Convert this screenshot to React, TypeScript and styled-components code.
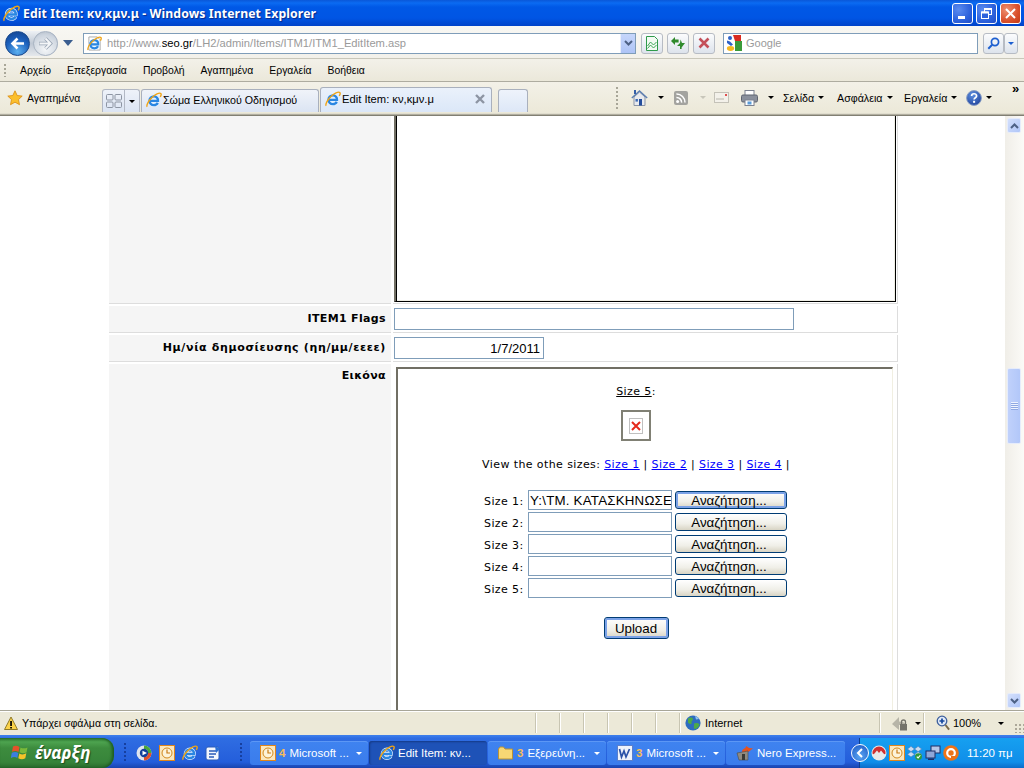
import React from "react";
import styled, { createGlobalStyle } from "styled-components";

const uiFont = '"Liberation Sans", Arial, sans-serif';
const titleFont = '"Noto Sans", "Liberation Sans", sans-serif';
const pageFont = '"DejaVu Sans", Verdana, sans-serif';

const GlobalStyle = createGlobalStyle`
  html, body {
    margin: 0;
    padding: 0;
    overflow: hidden;
    background: #fff;
  }
  * { box-sizing: border-box; }
`;

const Desktop = styled.div`
  width: 1024px;
  height: 768px;
  display: flex;
  flex-direction: column;
  overflow: hidden;
  font-family: ${uiFont};
  font-size: 11px;
  color: #000;
`;

/* ---------- title bar ---------- */
const TitleBar = styled.div`
  height: 26px;
  flex: none;
  display: flex;
  align-items: center;
  padding: 0 3px 0 3px;
  background: linear-gradient(#0a57d8 0, #0b6bf2 3px, #0058e6 7px, #0055e4 18px, #0043c9 26px);
`;

const TitleText = styled.div`
  margin-left: 3px;
  color: #fff;
  font-family: ${titleFont};
  font-weight: 700;
  font-size: 12.25px;
  letter-spacing: 0.1px;
  text-shadow: 1px 1px 1px #0a2a88;
`;

const WindowButtons = styled.div`
  margin-left: auto;
  display: flex;
  gap: 3px;
`;

const WindowButton = styled.div<{ $close?: boolean }>`
  width: 21px;
  height: 21px;
  border: 1px solid #fff;
  border-radius: 3px;
  display: flex;
  align-items: center;
  justify-content: center;
  background: ${(p) =>
    p.$close
      ? "radial-gradient(circle at 30% 30%, #ee9071, #d9502c 60%, #c23a16)"
      : "radial-gradient(circle at 30% 30%, #5b8cf0, #2d62dc 60%, #1f4cc6)"};
`;

/* ---------- address bar ---------- */
const AddressBar = styled.div`
  height: 33px;
  flex: none;
  display: flex;
  align-items: center;
  padding: 2px 6px 0 5px;
  background: linear-gradient(#f8f7f3, #f3f1ea);
  border-bottom: 1px solid #c9c7ba;
`;

const NavPill = styled.div`
  display: flex;
  gap: 3px;
  border-radius: 13px;
  background: linear-gradient(#eef1f5, #bfc8d4 50%, #e5e8ec);
`;

const NavCircle = styled.div<{ $off?: boolean }>`
  width: 25px;
  height: 25px;
  border-radius: 50%;
  display: flex;
  align-items: center;
  justify-content: center;
  border: 1px solid ${(p) => (p.$off ? "#a9b4c2" : "#1b4a8c")};
  background: ${(p) =>
    p.$off
      ? "radial-gradient(circle at 50% 75%, #f4f6f8, #ccd4de 70%, #aab4c2)"
      : "radial-gradient(circle at 50% 85%, #5cb0f0, #1b5fbb 55%, #123f8a)"};
`;

const NavArrow = styled.div`
  width: 0;
  height: 0;
  margin-left: 5px;
  border-left: 5px solid transparent;
  border-right: 5px solid transparent;
  border-top: 6px solid #3a5d8f;
`;

const AddressField = styled.div`
  width: 553px;
  height: 21px;
  margin-left: 10px;
  border: 1px solid #7f9db9;
  background: #fff;
  display: flex;
  align-items: center;
  padding-left: 3px;
  font-size: 11.2px;
  color: #9a9a9a;
  white-space: nowrap;
`;

const AddressText = styled.span`
  margin-left: 5px;
`;

const Host = styled.span`
  color: #000;
`;

const FieldDrop = styled.div`
  margin-left: auto;
  width: 15px;
  height: 19px;
  display: flex;
  align-items: center;
  justify-content: center;
  background: linear-gradient(#c6d6fb, #aec4f6);
  border-left: 1px solid #e8eefc;
`;

const RoundTool = styled.div<{ $first?: boolean }>`
  width: 22px;
  height: 21px;
  margin-left: ${(p) => (p.$first ? 5 : 4)}px;
  border: 1px solid #b7bcc4;
  border-radius: 3px;
  background: linear-gradient(#fbfcfd, #dde3ec);
  display: flex;
  align-items: center;
  justify-content: center;
`;

const SearchField = styled.div`
  width: 255px;
  height: 21px;
  margin-left: 8px;
  border: 1px solid #7f9db9;
  background: #fff;
  display: flex;
  align-items: center;
  padding-left: 2px;
  color: #9a9a9a;
  font-size: 11px;
`;

const SearchHint = styled.span`
  margin-left: 4px;
`;

const SearchGroup = styled.div`
  margin-left: 5px;
  display: flex;
`;

const SearchPart = styled.div<{ $w: number }>`
  width: ${(p) => p.$w}px;
  height: 21px;
  border: 1px solid #b7bcc4;
  border-radius: 3px;
  background: linear-gradient(#fbfcfd, #dde3ec);
  display: flex;
  align-items: center;
  justify-content: center;
`;

/* ---------- menu bar ---------- */
const MenuBar = styled.div`
  height: 23px;
  flex: none;
  display: flex;
  align-items: center;
  padding-left: 4px;
  gap: 16px;
  background: linear-gradient(#f3f1e9, #ebe8da);
  border-bottom: 1px solid #aeaca0;
`;

const Grip = styled.div<{ $h: number; $c?: string }>`
  width: 2px;
  height: ${(p) => p.$h}px;
  background: repeating-linear-gradient(${(p) => p.$c ?? "#a8a698"} 0 2px, transparent 2px 4px);
`;

const MenuGrip = styled(Grip)`
  margin-right: -2px;
`;

const MenuItem = styled.span`
  font-size: 10.4px;
`;

/* ---------- tabs and command bar ---------- */
const TabBar = styled.div`
  height: 30px;
  flex: none;
  display: flex;
  align-items: flex-end;
  padding-left: 7px;
  background: linear-gradient(#f3f1e8, #ece9d9);
`;

const Favorites = styled.div`
  width: 95px;
  height: 29px;
  display: flex;
  align-items: center;
  gap: 4px;
  font-size: 10.5px;
`;

const QuickTabs = styled.div`
  width: 38px;
  height: 23px;
  display: flex;
  border: 1px solid #b2b8c4;
  border-bottom: none;
  border-radius: 3px 3px 0 0;
  background: linear-gradient(#eef2f9, #dbe4f3);
`;

const QuickCell = styled.div<{ $w: number; $line?: boolean }>`
  width: ${(p) => p.$w}px;
  display: flex;
  align-items: center;
  justify-content: center;
  border-right: ${(p) => (p.$line ? "1px solid #b2b8c4" : "none")};
`;

const Tab = styled.div<{ $active?: boolean; $w: number }>`
  width: ${(p) => p.$w}px;
  height: ${(p) => (p.$active ? 25 : 23)}px;
  margin-left: 1px;
  display: flex;
  align-items: center;
  gap: 1px;
  padding: 0 6px 2px 4px;
  border: 1px solid #a9b0bd;
  border-bottom: none;
  border-radius: 3px 3px 0 0;
  font-size: ${(p) => (p.$active ? 11.2 : 10.7)}px;
  white-space: nowrap;
  background: ${(p) =>
    p.$active ? "linear-gradient(#eaf1fb, #dbe7f8)" : "linear-gradient(#f0f3f9, #dbe4f3)"};
`;

const TabClose = styled.div`
  margin-left: auto;
  display: flex;
`;

const NewTab = styled.div`
  width: 30px;
  height: 23px;
  margin-left: 6px;
  border: 1px solid #a9b0bd;
  border-bottom: none;
  border-radius: 3px 3px 0 0;
  background: linear-gradient(#eef3fb, #dde7f7);
`;

const CommandBar = styled.div`
  height: 29px;
  margin-left: 88px;
  display: flex;
  align-items: center;
  font-size: 10.7px;
  white-space: nowrap;
`;

const CommandSlot = styled.div<{ $w: number }>`
  width: ${(p) => p.$w}px;
  flex: none;
  display: flex;
  align-items: center;
  gap: 4px;
`;

const TinyDown = styled.span<{ $c?: string; $ml?: number }>`
  display: inline-block;
  width: 0;
  height: 0;
  margin-left: ${(p) => p.$ml ?? 0}px;
  border-left: 3px solid transparent;
  border-right: 3px solid transparent;
  border-top: 3px solid ${(p) => p.$c ?? "#000"};
`;

const Chevrons = styled.div`
  align-self: flex-start;
  margin-top: 0;
  font-size: 13px;
  font-weight: 700;
  line-height: 12px;
`;

const ChromeRule = styled.div`
  height: 4px;
  flex: none;
  background: linear-gradient(#ece9d9 0, #ece9d9 1px, #d5d2c4 2px, #8c8a7c 3px, #77756a 4px);
`;

/* ---------- page ---------- */
const Viewport = styled.div`
  height: 594px;
  flex: none;
  display: flex;
  overflow: hidden;
  background: #fff;
`;

const Page = styled.div`
  width: 1005px;
  height: 594px;
  overflow: hidden;
  padding-left: 109px;
  display: flex;
  flex-direction: column;
  gap: 2px;
  font-family: ${pageFont};
  font-size: 11px;
`;

const Row = styled.div<{ $h: number }>`
  flex: none;
  display: grid;
  grid-template-columns: 282px 505px;
  column-gap: 2px;
  height: ${(p) => p.$h}px;
  width: 789px;
`;

const LabelCell = styled.div<{ $wide?: boolean; $top?: number }>`
  background: #f5f5f5;
  border-bottom: 1px solid #ddd;
  padding: ${(p) => p.$top ?? 6}px 5px 0 0;
  text-align: right;
  font-weight: 700;
  font-size: 11px;
  letter-spacing: ${(p) => (p.$wide ? 0.65 : 0.35)}px;
`;

const ValueCell = styled.div<{ $pad?: string }>`
  border-bottom: 1px solid #ddd;
  border-right: 1px solid #ddd;
  padding: ${(p) => p.$pad ?? "2px 0 0 1px"};
  overflow: hidden;
`;

const EditorFrame = styled.div`
  width: 502px;
  height: 186px;
  background: #fff;
  border-left: 2px solid #716f64;
  border-right: 1px solid #000;
  border-bottom: 1px solid #000;
  box-shadow: inset 1px 0 0 #000, inset -1px -1px 0 #f0efe6;
`;

const TextBox = styled.input<{ $w: number; $right?: boolean }>`
  display: block;
  width: ${(p) => p.$w}px;
  height: 22px;
  padding: 0 3px 0 2px;
  border: 1px solid #7f9db9;
  background: #fff;
  font-family: "Liberation Sans", sans-serif;
  font-size: 13px;
  text-align: ${(p) => (p.$right ? "right" : "left")};
  color: #000;
  outline: none;
`;

const ImageFrame = styled.div`
  width: 497px;
  height: 420px;
  border-top: 2px solid #716f64;
  border-left: 2px solid #716f64;
  border-right: 1px solid #f1efe2;
  padding: 16px 18px 0 0;
  display: flex;
  flex-direction: column;
  align-items: center;
  letter-spacing: 0.4px;
`;

const SizeTitle = styled.div`
  height: 13px;
  line-height: 13px;
`;

const Underlined = styled.span`
  text-decoration: underline;
`;

const PreviewBox = styled.div`
  width: 30px;
  height: 31px;
  margin-top: 12px;
  border: 2px solid #808074;
  display: flex;
  align-items: center;
  justify-content: center;
`;

const BrokenImage = styled.div`
  width: 14px;
  height: 16px;
  border: 1px solid #c0c0c0;
  display: flex;
  align-items: center;
  justify-content: center;
`;

const SizeLinks = styled.div`
  margin-top: 17px;
  height: 13px;
  line-height: 13px;
  white-space: pre;
`;

const SizeLink = styled.a`
  color: #0000ff;
  text-decoration: underline;
`;

const UploadList = styled.div`
  margin: 18px 1px 0 0;
  display: flex;
  flex-direction: column;
`;

const UploadRow = styled.div`
  height: 22px;
  display: flex;
  align-items: center;
`;

const UploadLabel = styled.span`
  width: 44px;
  padding-top: 3px;
`;

const FileBox = styled(TextBox)`
  height: 20px;
  padding: 0 0 0 1px;
  font-size: 13.33px;
  letter-spacing: 0.2px;
`;

const XpButton = styled.button<{ $focus?: boolean; $w: number; $h: number }>`
  width: ${(p) => p.$w}px;
  height: ${(p) => p.$h}px;
  padding: 0;
  border: 1px solid #003c74;
  border-radius: 3px;
  font-family: "Liberation Sans", sans-serif;
  font-size: 13.33px;
  color: #000;
  background: linear-gradient(#fff, #f0efe8 60%, #d8d4c4);
  box-shadow: ${(p) => (p.$focus ? "inset 0 0 0 2px #7ba2e7" : "none")};
`;

const BrowseButton = styled(XpButton)`
  margin-left: 3px;
  padding-right: 4px;
`;

const UploadButton = styled(XpButton)`
  margin-top: 18px;
`;

/* ---------- scrollbar ---------- */
const ScrollBar = styled.div`
  width: 19px;
  flex: none;
  padding: 2px 3px 2px 2px;
  display: flex;
  flex-direction: column;
  background: linear-gradient(90deg, #f0eee8, #fbfaf7);
`;

const ScrollButton = styled.div`
  width: 14px;
  height: 15px;
  flex: none;
  border: 1px solid #e6ecfb;
  border-radius: 2px;
  background: linear-gradient(135deg, #d4e0fc, #b0c6f8);
  display: flex;
  align-items: center;
  justify-content: center;
`;

const ScrollThumb = styled.div`
  width: 14px;
  height: 76px;
  flex: none;
  margin-top: 235px;
  border: 1px solid #e6ecfb;
  border-radius: 2px;
  background: linear-gradient(90deg, #c0d1fb, #b2c7f9);
  display: flex;
  align-items: center;
  justify-content: center;
`;

const ThumbLines = styled.div`
  width: 7px;
  height: 8px;
  background: repeating-linear-gradient(#eef3ff 0 1px, #8fa8e2 1px 2px);
`;

const ScrollGap = styled.div`
  flex: 1;
`;

/* ---------- status bar ---------- */
const StatusBar = styled.div`
  height: 25px;
  flex: none;
  display: flex;
  align-items: center;
  background: #ece9d8;
  border-top: 1px solid #a8a698;
  box-shadow: inset 0 1px 0 #fff;
  font-size: 11px;
  padding-left: 4px;
`;

const StatusMessage = styled.div`
  width: 532px;
  display: flex;
  align-items: center;
  gap: 4px;
  font-size: 10.6px;
`;

const StatusPane = styled.div<{ $w: number; $gap?: number; $pad?: number }>`
  width: ${(p) => p.$w}px;
  height: 20px;
  flex: none;
  display: flex;
  align-items: center;
  gap: ${(p) => p.$gap ?? 4}px;
  border-left: 1px solid #fff;
  box-shadow: -1px 0 0 #c8c5b2;
  padding-left: ${(p) => p.$pad ?? 4}px;
`;

const ZoomValue = styled.span`
  width: 42px;
`;

const SizeGrip = styled.div`
  width: 10px;
  height: 10px;
  margin: 10px 0 0 auto;
  background: radial-gradient(circle, #aca899 1px, transparent 1.2px) 0 0 / 4px 4px;
`;

/* ---------- taskbar ---------- */
const TaskBar = styled.div`
  height: 33px;
  flex: none;
  display: flex;
  align-items: flex-end;
  background: linear-gradient(#3f7fe8 0, #3a7cec 1px, #2f6de2 3px, #245edb 27px, #1a44ae 33px);
  color: #fff;
  font-size: 11.5px;
`;

const StartButton = styled.div`
  width: 114px;
  height: 30px;
  flex: none;
  display: flex;
  align-items: center;
  gap: 6px;
  padding-left: 11px;
  border-radius: 0 12px 12px 0;
  background: linear-gradient(#2f7a33 0, #4da34f 4px, #3d8c3e 10px, #37843a 24px, #2a6c2d 30px);
  box-shadow: inset -2px 0 3px #1c5a20;
`;

const StartText = styled.span`
  font-family: ${titleFont};
  font-size: 17px;
  font-weight: 700;
  font-style: italic;
  text-shadow: 1px 1px 1px #1c4d1e;
  line-height: 24px;
`;

const QuickLaunch = styled.div`
  width: 136px;
  height: 30px;
  flex: none;
  display: flex;
  align-items: center;
  padding-left: 10px;
`;

const QuickIcons = styled.div`
  display: flex;
  align-items: center;
  gap: 7px;
  margin-left: 10px;
`;

const TaskGrip = styled(Grip)`
  margin-left: 19px;
`;

const TaskButtons = styled.div`
  display: flex;
  gap: 1px;
  padding-bottom: 3px;
`;

const TaskButton = styled.div<{ $active?: boolean; $w?: number }>`
  width: ${(p) => p.$w ?? 118}px;
  height: 24px;
  display: flex;
  align-items: center;
  gap: 3px;
  padding: 0 6px 0 10px;
  border-radius: 3px;
  white-space: nowrap;
  background: ${(p) => (p.$active ? "#1e52b7" : "linear-gradient(#3f83f0, #3a7cec)")};
  box-shadow: ${(p) => (p.$active ? "inset 1px 1px 2px #153a86" : "inset 0 1px 0 #5c97f5")};
`;

const Count = styled.b`
  color: #f7bc5b;
  margin-right: 1px;
`;

const TaskDrop = styled(TinyDown)`
  margin-left: auto;
`;

const Tray = styled.div`
  margin-left: 14px;
  flex: 1;
  height: 30px;
  display: flex;
  align-items: center;
  background: linear-gradient(#16a0f0 0, #108ee9 24px, #0b6cc8 30px);
  border-left: 1px solid #0a3d91;
`;

const TrayToggle = styled.div`
  width: 18px;
  height: 18px;
  margin-left: -9px;
  flex: none;
  border-radius: 50%;
  border: 1px solid #fff;
  background: radial-gradient(circle at 50% 70%, #5aa5f2, #1a56c4);
  display: flex;
  align-items: center;
  justify-content: center;
`;

const TrayIcons = styled.div`
  display: flex;
  align-items: center;
  gap: 2px;
  margin-left: 2px;
`;

const Clock = styled.span`
  margin-left: 8px;
`;

const FixedSvg = styled.svg`
  flex: none;
`;

/* ---------- drawings ---------- */
const ieLetter =
  "M3.6 8.9h8.4c.2-2.6-1.5-4.5-4-4.5-2.6 0-4.5 2-4.5 4.4 0 2.5 1.9 4.3 4.4 4.3 1.8 0 3.2-.9 3.9-2.2";

const IeLogo = ({ size = 16, page }: { size?: number; page?: boolean }) => (
  <FixedSvg width={size} height={size} viewBox="0 0 16 16">
    {page && <path d="M2 1h9l3 3v11H2z" fill="#fff" stroke="#a8a8a8" />}
    <path d={ieLetter} fill="none" stroke="#e4f2ff" strokeWidth="3.6" />
    <path d={ieLetter} fill="none" stroke="#2a86e2" strokeWidth="2.4" />
    <path
      d="M1.2 14.8c-1.3-1.6 2-7.4 6.2-10.6 3-2.2 6.4-3.6 7.4-2.6.8.8.2 2.2-.5 3.4"
      fill="none"
      stroke="#f0a414"
      strokeWidth="1.4"
    />
  </FixedSvg>
);

const Star = () => (
  <svg width="16" height="16" viewBox="0 0 16 16">
    <path
      d="M8 .8l2.2 4.7 5 .6-3.700 3.500 1 5.100L8 12.200l-4.500 2.500 1-5.100L.8 6.100l5-.6z"
      fill="#fbbf2c"
      stroke="#d98a10"
      strokeWidth=".8"
    />
  </svg>
);

const QuickGrid = () => (
  <svg width="16" height="14" viewBox="0 0 16 14" fill="none" stroke="#8d95a3">
    <rect x=".5" y=".5" width="6.5" height="5.5" rx="1" />
    <rect x="9" y=".5" width="6.5" height="5.5" rx="1" />
    <rect x=".5" y="8" width="6.5" height="5.5" rx="1" />
    <rect x="9" y="8" width="6.5" height="5.5" rx="1" />
  </svg>
);

const CompatIcon = () => (
  <svg width="14" height="15" viewBox="0 0 14 15">
    <path d="M1.5.5h8l3 3v11h-11z" fill="#f2faf2" stroke="#2f9a4a" />
    <path d="M2.5 10l3-4 3 3 3-3M2.5 12.5l3-3.5 3 3 3-3" fill="none" stroke="#3aa655" />
  </svg>
);

const RefreshIcon = () => (
  <svg width="16" height="14" viewBox="0 0 16 14">
    <path d="M1 5l4-4v2.4h3.6v3.2H5V9z" fill="#2f8a2c" />
    <path d="M15 7l-3.4 4.6V13H10V10H7l3-3 .6-3.5L12 7z" fill="#2f8a2c" />
  </svg>
);

const StopIcon = () => (
  <svg width="12" height="12" viewBox="0 0 12 12">
    <path d="M1.5 1.5l9 9M10.5 1.5l-9 9" stroke="#c4505a" strokeWidth="2.6" />
  </svg>
);

const GoogleMark = () => (
  <FixedSvg width="16" height="16" viewBox="0 0 16 16">
    <path d="M7 0h8v6H9z" fill="#d92b20" />
    <path d="M9 6h7v10H9z" fill="#3a9a3a" />
    <circle cx="4" cy="3" r="2" fill="#2d62c8" />
    <path d="M1 5.5l3 1 3 3-2 1.5-4-3z" fill="#2d62c8" />
    <ellipse cx="4.5" cy="13.5" rx="3.6" ry="2.4" fill="#f5b820" />
  </FixedSvg>
);

const SearchGlass = () => (
  <svg width="13" height="13" viewBox="0 0 13 13" fill="none">
    <circle cx="8" cy="5" r="3.6" stroke="#1d5fd0" strokeWidth="1.7" />
    <path d="M5.2 7.8L1.3 11.7" stroke="#1d5fd0" strokeWidth="2" />
  </svg>
);

const ChevronDown = ({ c = "#4d6185" }: { c?: string }) => (
  <svg width="9" height="6" viewBox="0 0 9 6" fill="none">
    <path d="M1 1l3.5 3.5L8 1" stroke={c} strokeWidth="2" />
  </svg>
);

const ChevronUp = () => (
  <svg width="9" height="6" viewBox="0 0 9 6" fill="none">
    <path d="M1 5l3.5-3.5L8 5" stroke="#4d6185" strokeWidth="2" />
  </svg>
);

const BackArrow = () => (
  <svg width="15" height="13" viewBox="0 0 15 13" fill="none">
    <path d="M14 6.5H3M7.5 1.5l-5 5 5 5" stroke="#fff" strokeWidth="2.6" />
  </svg>
);

const ForwardArrow = () => (
  <svg width="15" height="13" viewBox="0 0 15 13" fill="none">
    <path d="M1 6.5h11M7.5 1.5l5 5-5 5" stroke="#98a4b4" strokeWidth="3.4" />
    <path d="M1.5 6.5h10.500M7.5 1.5l5 5-5 5" stroke="#f4f6f8" strokeWidth="1.8" />
  </svg>
);

const HomeIcon = () => (
  <svg width="17" height="16" viewBox="0 0 17 16">
    <path d="M3 7l5.5-5 5.5 5v8.5H3z" fill="#e8eaee" stroke="#8b95a6" />
    <path d="M.8 8l7.7-7 7.7 7" fill="none" stroke="#5d7fb2" strokeWidth="1.4" />
    <rect x="8" y="9" width="3" height="6.5" fill="#234d9c" />
    <rect x="4.5" y="9" width="2.4" height="2.6" fill="#3d6bb5" />
    <rect x="3" y="0" width="2" height="4" fill="#355fa8" />
  </svg>
);

const RssIcon = () => (
  <svg width="14" height="14" viewBox="0 0 14 14">
    <rect width="14" height="14" rx="2" fill="#a3a39f" />
    <circle cx="3.6" cy="10.6" r="1.5" fill="#fff" />
    <path d="M2.4 6.4a5 5 0 0 1 5.2 5.2M2.4 3a8.4 8.4 0 0 1 8.6 8.6" fill="none" stroke="#fff" strokeWidth="1.5" />
  </svg>
);

const MailIcon = () => (
  <svg width="15" height="11" viewBox="0 0 15 11">
    <rect x=".5" y=".5" width="14" height="10" fill="#f3f1ea" stroke="#c4c2b8" />
    <path d="M2 7h8" stroke="#b8b6ac" />
    <rect x="11" y="2" width="2" height="2" fill="#e05050" />
  </svg>
);

const PrinterIcon = () => (
  <svg width="17" height="16" viewBox="0 0 17 16">
    <rect x="4" y=".5" width="9" height="5" fill="#fff" stroke="#7c8290" />
    <rect x=".5" y="5" width="16" height="7" rx="1.5" fill="#8a909c" stroke="#5f6470" />
    <rect x="4" y="10" width="9" height="5.5" fill="#fff" stroke="#7c8290" />
    <rect x="6.5" y="11.5" width="4" height="3" fill="#5a9bd8" />
  </svg>
);

const HelpIcon = () => (
  <svg width="16" height="16" viewBox="0 0 16 16">
    <defs>
      <radialGradient id="helpFill" cx="40%" cy="30%" r="80%">
        <stop offset="0" stopColor="#5d8fe0" />
        <stop offset="1" stopColor="#1d3f98" />
      </radialGradient>
    </defs>
    <circle cx="8" cy="8" r="7.4" fill="url(#helpFill)" stroke="#8a9fc4" />
    <path d="M5.6 6c0-3 5-3 5 0 0 1.8-2.5 1.8-2.5 3.6" fill="none" stroke="#fff" strokeWidth="1.7" />
    <rect x="7.1" y="10.8" width="2" height="2" fill="#fff" />
  </svg>
);

const CloseMark = () => (
  <svg width="10" height="10" viewBox="0 0 10 10">
    <path d="M1 1l8 8M9 1l-8 8" stroke="#8d95a3" strokeWidth="2.4" />
  </svg>
);

const WarnIcon = () => (
  <svg width="14" height="15" viewBox="0 0 14 15">
    <path d="M7 1l6.5 12.5H.5z" fill="#fbd34a" stroke="#8f7a28" />
    <rect x="6.2" y="5" width="1.7" height="5" fill="#000" />
    <rect x="6.2" y="11" width="1.7" height="1.5" fill="#000" />
  </svg>
);

const Globe = () => (
  <svg width="16" height="16" viewBox="0 0 16 16">
    <circle cx="8" cy="8" r="7.6" fill="#2e6cc0" />
    <path d="M3 3.5c2-1.5 5-1 5 .5S6 6 6.5 8 4.5 9 3 7.5z" fill="#4eaa48" />
    <path d="M9 8.5c2-1 5-.5 5.5 1-.5 2.5-3 4.5-5 4.5-1.5-1.5 0-3.5-.5-5.500z" fill="#4eaa48" />
    <path d="M10 1c2 .5 3 1.5 4 3l-3 .5z" fill="#8fc4ee" />
  </svg>
);

const LockIcon = () => (
  <svg width="18" height="17" viewBox="0 0 18 17">
    <path d="M1 9l7-7v4.500C14 6.500 15 10 15 10H8v5z" fill="#b7b5a8" />
    <rect x="9" y="9" width="7" height="6.5" fill="#74736a" />
    <path d="M10.5 9V7a2 2 0 0 1 4 0v2" fill="none" stroke="#74736a" strokeWidth="1.3" />
  </svg>
);

const ZoomIcon = () => (
  <svg width="14" height="16" viewBox="0 0 14 16">
    <circle cx="6" cy="6" r="4.8" fill="#dfe9f7" stroke="#3d5f9c" strokeWidth="1.3" />
    <path d="M3.5 6h5M6 3.5v5" stroke="#15479c" strokeWidth="1.7" />
    <path d="M9.5 10l3.6 4.6" stroke="#7a6a4a" strokeWidth="2" />
  </svg>
);

const WinFlag = () => (
  <svg width="18" height="18" viewBox="0 0 18 18">
    <path d="M2 2.500c2.300-1 4.300-.8 6.500.4L7.500 8C5.500 6.800 3.500 6.700 1 7.800z" fill="#e5522a" />
    <path d="M9.500 3.400c2 1.200 4.300 1.300 7 .1l-1 5c-2.500 1.100-4.700 1-7-.2z" fill="#7ab93a" />
    <path d="M.8 8.800c2.500-1.100 4.500-1 6.500.2l-1 5c-2-1.200-4-1.200-6.500 0z" fill="#3c7ee0" />
    <path d="M8.300 9.500c2.300 1.200 4.500 1.300 7-.2l-1 5c-2.500 1.300-4.800 1.100-7-.1z" fill="#f6c32a" />
  </svg>
);

const ClockTile = ({ size = 16 }: { size?: number }) => (
  <FixedSvg width={size} height={size} viewBox="0 0 16 16">
    <rect x=".5" y=".5" width="15" height="15" fill="#fbe7bd" stroke="#e0861c" />
    <circle cx="8" cy="8" r="5" fill="#fdf3da" stroke="#d2891e" />
    <path d="M8 4.500V8h3" fill="none" stroke="#c97a14" strokeWidth="1.2" />
  </FixedSvg>
);

const MediaIcon = () => (
  <svg width="16" height="16" viewBox="0 0 16 16">
    <circle cx="8" cy="8" r="7.5" fill="#dfe4ee" />
    <path d="M8 .5A7.5 7.5 0 0 1 15.500 8H12a4 4 0 0 0-4-4z" fill="#4aa83a" />
    <path d="M15.500 8A7.5 7.5 0 0 1 8 15.500V12a4 4 0 0 0 4-4z" fill="#e24f2a" />
    <circle cx="8" cy="8" r="4.2" fill="#14409a" />
    <path d="M6.500 5.700L11 8l-4.500 2.300z" fill="#fff" />
  </svg>
);

const DeskIcon = () => (
  <svg width="16" height="16" viewBox="0 0 16 16">
    <rect x="1" y="2" width="13" height="13" rx="2" fill="#f2f6fd" stroke="#2a5bb8" />
    <path d="M4 6h7M4 9h7M4 12h5" stroke="#2a5bb8" strokeWidth="1.3" />
    <path d="M10 1l5 3-4 4z" fill="#2a6fd6" />
  </svg>
);

const FolderIcon = () => (
  <FixedSvg width="16" height="14" viewBox="0 0 16 14">
    <path d="M.5 3V13h14V3H7L5.500 1H2z" fill="#f7d774" stroke="#b89237" />
  </FixedSvg>
);

const WordIcon = () => (
  <FixedSvg width="16" height="16" viewBox="0 0 16 16">
    <rect x=".5" y=".5" width="15" height="15" fill="#eef2fb" stroke="#5b7fcb" />
    <path d="M2.500 4l2 8 2.500-6 2 6 3.500-8" fill="none" stroke="#2a52a8" strokeWidth="1.7" />
  </FixedSvg>
);

const NeroIcon = () => (
  <FixedSvg width="18" height="16" viewBox="0 0 18 16">
    <path d="M6 7C6 3 10 4 10 1c3 1 2 3 7 2-2 2-5 5-9 5z" fill="#e8521e" />
    <path d="M1 8l11-2v9H3z" fill="#8f8a80" stroke="#4c4a44" strokeWidth=".6" />
    <rect x="6" y="9" width="3" height="6" fill="#3a3a36" />
  </FixedSvg>
);

const RedTray = () => (
  <svg width="16" height="16" viewBox="0 0 16 16">
    <circle cx="8" cy="8" r="7.5" fill="#e8e8e8" />
    <path d="M1.500 8A6.500 6.500 0 0 1 14.500 8c0 1.500-1 1.500-2 .5L10 5.500 8 8 6 5.500 3.500 8.500c-1 1-2 1-2-.5z" fill="#d03030" />
  </svg>
);

const DropboxTray = () => (
  <svg width="16" height="16" viewBox="0 0 18 17">
    <path d="M4.500 1L8.500 4 4.500 7 .5 4zM12.500 1l4 3-4 3-4-3zM4.500 7l4 3-4 3-4-3zM12.500 7l4 3-4 3-4-3z" fill="#c9dcf2" stroke="#4a80bb" strokeWidth=".7" />
    <circle cx="13" cy="12.5" r="3.8" fill="#2f9a3a" />
    <path d="M11 12.500l1.500 1.500 2.500-3" fill="none" stroke="#fff" strokeWidth="1.2" />
  </svg>
);

const NetworkTray = () => (
  <svg width="16" height="16" viewBox="0 0 16 16">
    <rect x="6" y="1" width="9" height="7" fill="#b6c7e8" stroke="#1f2f66" />
    <rect x="1" y="6" width="9" height="7" fill="#8fa7d8" stroke="#1f2f66" />
    <rect x="3" y="13.5" width="6" height="1.5" fill="#1f2f66" />
  </svg>
);

const AvastTray = () => (
  <svg width="16" height="16" viewBox="0 0 16 16">
    <circle cx="8" cy="8" r="7.8" fill="#ed7318" />
    <circle cx="8" cy="8" r="3.8" fill="none" stroke="#fff" strokeWidth="2.2" />
    <path d="M8 12h4" stroke="#ed7318" strokeWidth="2" />
  </svg>
);

const menuItems = ["Αρχείο", "Επεξεργασία", "Προβολή", "Αγαπημένα", "Εργαλεία", "Βοήθεια"];
const uploadSizes = [1, 2, 3, 4, 5];

export default function App() {
  return (
    <Desktop>
      <GlobalStyle />

      <TitleBar>
        <IeLogo size={17} />
        <TitleText>Edit Item: κν,κμν.μ - Windows Internet Explorer</TitleText>
        <WindowButtons>
          <WindowButton>
            <svg width="13" height="13" viewBox="0 0 13 13">
              <rect x="2" y="9" width="7" height="3" fill="#fff" />
            </svg>
          </WindowButton>
          <WindowButton>
            <svg width="13" height="13" viewBox="0 0 13 13" fill="none" stroke="#fff">
              <rect x="4.5" y="1.5" width="7" height="6" />
              <rect x="1.5" y="5" width="7" height="6.5" fill="#2d62dc" />
              <path d="M1.500 5.500h7M4.500 2h7" strokeWidth="2" />
            </svg>
          </WindowButton>
          <WindowButton $close>
            <svg width="13" height="13" viewBox="0 0 13 13">
              <path d="M2 2l9 9M11 2l-9 9" stroke="#fff" strokeWidth="2" />
            </svg>
          </WindowButton>
        </WindowButtons>
      </TitleBar>

      <AddressBar>
        <NavPill>
          <NavCircle>
            <BackArrow />
          </NavCircle>
          <NavCircle $off>
            <ForwardArrow />
          </NavCircle>
        </NavPill>
        <NavArrow />
        <AddressField>
          <IeLogo size={15} page />
          <AddressText>
            http://www.<Host>seo.gr</Host>/LH2/admin/Items/ITM1/ITM1_EditItem.asp
          </AddressText>
          <FieldDrop>
            <ChevronDown />
          </FieldDrop>
        </AddressField>
        <RoundTool $first>
          <CompatIcon />
        </RoundTool>
        <RoundTool>
          <RefreshIcon />
        </RoundTool>
        <RoundTool>
          <StopIcon />
        </RoundTool>
        <SearchField>
          <GoogleMark />
          <SearchHint>Google</SearchHint>
        </SearchField>
        <SearchGroup>
          <SearchPart $w={21}>
            <SearchGlass />
          </SearchPart>
          <SearchPart $w={14}>
            <TinyDown $c="#1d5fd0" />
          </SearchPart>
        </SearchGroup>
      </AddressBar>

      <MenuBar>
        <MenuGrip $h={13} />
        {menuItems.map((item) => (
          <MenuItem key={item}>{item}</MenuItem>
        ))}
      </MenuBar>

      <TabBar>
        <Favorites>
          <Star />
          <span>Αγαπημένα</span>
        </Favorites>
        <QuickTabs>
          <QuickCell $w={23} $line>
            <QuickGrid />
          </QuickCell>
          <QuickCell $w={14}>
            <TinyDown />
          </QuickCell>
        </QuickTabs>
        <Tab $w={178}>
          <IeLogo />
          <span>Σώμα Ελληνικού Οδηγισμού</span>
        </Tab>
        <Tab $active $w={172}>
          <IeLogo />
          <span>Edit Item: κν,κμν.μ</span>
          <TabClose>
            <CloseMark />
          </TabClose>
        </Tab>
        <NewTab />
        <CommandBar>
          <CommandSlot $w={15}>
            <Grip $h={22} />
          </CommandSlot>
          <CommandSlot $w={43}>
            <HomeIcon />
            <TinyDown $ml={6} />
          </CommandSlot>
          <CommandSlot $w={40}>
            <RssIcon />
            <TinyDown $c="#c8c6ba" $ml={8} />
          </CommandSlot>
          <CommandSlot $w={27}>
            <MailIcon />
          </CommandSlot>
          <CommandSlot $w={42}>
            <PrinterIcon />
            <TinyDown $ml={6} />
          </CommandSlot>
          <CommandSlot $w={54}>
            <span>Σελίδα</span>
            <TinyDown />
          </CommandSlot>
          <CommandSlot $w={67}>
            <span>Ασφάλεια</span>
            <TinyDown />
          </CommandSlot>
          <CommandSlot $w={62}>
            <span>Εργαλεία</span>
            <TinyDown />
          </CommandSlot>
          <CommandSlot $w={46}>
            <HelpIcon />
            <TinyDown />
          </CommandSlot>
          <Chevrons>»</Chevrons>
        </CommandBar>
      </TabBar>
      <ChromeRule />

      <Viewport>
        <Page>
          <Row $h={188}>
            <LabelCell />
            <ValueCell $pad="0 0 0 1px">
              <EditorFrame />
            </ValueCell>
          </Row>
          <Row $h={27}>
            <LabelCell>ITEM1 Flags</LabelCell>
            <ValueCell>
              <TextBox $w={400} readOnly value="" />
            </ValueCell>
          </Row>
          <Row $h={27}>
            <LabelCell $wide>Ημ/νία δημοσίευσης (ηη/μμ/εεεε)</LabelCell>
            <ValueCell>
              <TextBox $w={150} $right readOnly value="1/7/2011" />
            </ValueCell>
          </Row>
          <Row $h={420}>
            <LabelCell $top={5}>Εικόνα</LabelCell>
            <ValueCell $pad="3px 0 0 3px">
              <ImageFrame>
                <SizeTitle>
                  <Underlined>Size 5</Underlined>:
                </SizeTitle>
                <PreviewBox>
                  <BrokenImage>
                    <svg width="10" height="10" viewBox="0 0 10 10">
                      <path d="M1 1l8 8M9 1l-8 8" stroke="#e5291b" strokeWidth="2" />
                    </svg>
                  </BrokenImage>
                </PreviewBox>
                <SizeLinks>
                  View the othe sizes: <SizeLink>Size 1</SizeLink> | <SizeLink>Size 2</SizeLink> |{" "}
                  <SizeLink>Size 3</SizeLink> | <SizeLink>Size 4</SizeLink> |
                </SizeLinks>
                <UploadList>
                  {uploadSizes.map((n) => (
                    <UploadRow key={n}>
                      <UploadLabel>Size {n}:</UploadLabel>
                      <FileBox $w={144} readOnly value={n === 1 ? "Y:\\ΤΜ. ΚΑΤΑΣΚΗΝΩΣΕΙΣ" : ""} />
                      <BrowseButton $w={112} $h={18} $focus={n === 1}>
                        Αναζήτηση...
                      </BrowseButton>
                    </UploadRow>
                  ))}
                </UploadList>
                <UploadButton $w={65} $h={22} $focus>
                  Upload
                </UploadButton>
              </ImageFrame>
            </ValueCell>
          </Row>
        </Page>
        <ScrollBar>
          <ScrollButton>
            <ChevronUp />
          </ScrollButton>
          <ScrollThumb>
            <ThumbLines />
          </ScrollThumb>
          <ScrollGap />
          <ScrollButton>
            <ChevronDown />
          </ScrollButton>
        </ScrollBar>
      </Viewport>

      <StatusBar>
        <StatusMessage>
          <WarnIcon />
          <span>Υπάρχει σφάλμα στη σελίδα.</span>
        </StatusMessage>
        {[0, 1, 2, 3, 4, 5].map((n) => (
          <StatusPane key={n} $w={24} />
        ))}
        <StatusPane $w={200}>
          <Globe />
          <span>Internet</span>
        </StatusPane>
        <StatusPane $w={44} $gap={6} $pad={10}>
          <LockIcon />
          <TinyDown />
        </StatusPane>
        <StatusPane $w={88} $gap={3} $pad={11}>
          <ZoomIcon />
          <ZoomValue>100%</ZoomValue>
          <TinyDown />
        </StatusPane>
        <SizeGrip />
      </StatusBar>

      <TaskBar>
        <StartButton>
          <WinFlag />
          <StartText>έναρξη</StartText>
        </StartButton>
        <QuickLaunch>
          <Grip $h={20} $c="#163f9f" />
          <QuickIcons>
            <MediaIcon />
            <ClockTile />
            <IeLogo />
            <DeskIcon />
          </QuickIcons>
          <TaskGrip $h={20} $c="#163f9f" />
        </QuickLaunch>
        <TaskButtons>
          <TaskButton>
            <ClockTile />
            <Count>4</Count>
            <span>Microsoft ...</span>
            <TaskDrop $c="#fff" />
          </TaskButton>
          <TaskButton $active>
            <IeLogo />
            <span>Edit Item: κν...</span>
          </TaskButton>
          <TaskButton>
            <FolderIcon />
            <Count>3</Count>
            <span>Εξερεύνη...</span>
            <TaskDrop $c="#fff" />
          </TaskButton>
          <TaskButton>
            <WordIcon />
            <Count>3</Count>
            <span>Microsoft ...</span>
            <TaskDrop $c="#fff" />
          </TaskButton>
          <TaskButton $w={119}>
            <NeroIcon />
            <span>Nero Express...</span>
          </TaskButton>
        </TaskButtons>
        <Tray>
          <TrayToggle>
            <svg width="8" height="10" viewBox="0 0 8 10" fill="none">
              <path d="M6 1L2 5l4 4" stroke="#fff" strokeWidth="2" />
            </svg>
          </TrayToggle>
          <TrayIcons>
            <RedTray />
            <ClockTile />
            <DropboxTray />
            <NetworkTray />
            <AvastTray />
          </TrayIcons>
          <Clock>11:20 πμ</Clock>
        </Tray>
      </TaskBar>
    </Desktop>
  );
}
